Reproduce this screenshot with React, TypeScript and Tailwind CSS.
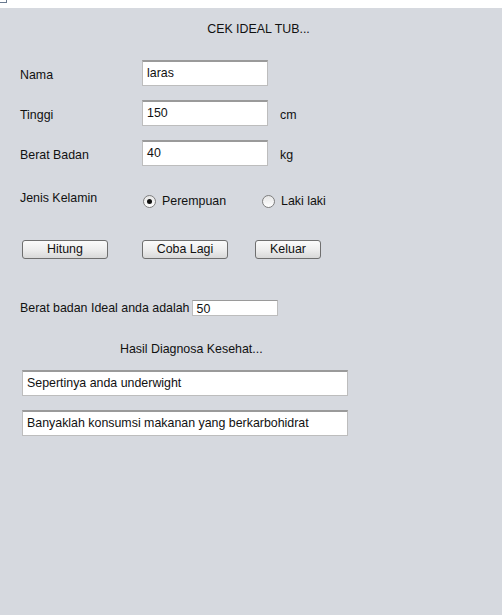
import React from "react";

const font = { fontFamily: '"Liberation Sans", Arial, sans-serif' };

function Field({ value, w, cls = "" }: { value: string; w: string; cls?: string }) {
  return (
    <div
      className={`h-[26px] ${w} bg-white border border-[#bdbdbd] border-t-2 border-t-[#9a9a9a] flex items-center pl-[4px] text-[12.4px] text-[#111] ${cls}`}
    >
      {value}
    </div>
  );
}

function Btn({ label, w, ml }: { label: string; w: string; ml: string }) {
  return (
    <div
      className={`h-[19px] ${w} ${ml} rounded-[3px] border border-[#6f6f6f] bg-gradient-to-b from-[#fbfbfb] via-[#eeeeee] to-[#d9d9d9] flex items-center justify-center text-[12.4px] text-[#111]`}
    >
      {label}
    </div>
  );
}

function Radio({ checked }: { checked: boolean }) {
  return (
    <div className="w-[13px] h-[13px] rounded-full border border-[#7e7e7e] bg-gradient-to-b from-[#e6e6e6] to-white flex items-center justify-center">
      {checked && <div className="w-[5px] h-[5px] rounded-full bg-[#111]" />}
    </div>
  );
}

export default function App() {
  return (
    <div className="w-[503px] h-[615px] bg-white flex flex-col" style={font}>
      <div className="h-[8px] bg-white relative">
        <div className="absolute left-0 top-0 w-[7px] h-[3px] border-b border-r border-[#6a7a90]" />
      </div>
      <div className="flex-1 bg-[#d6d9df] mr-[1px] flex flex-col text-[12.4px] text-[#111]">
        <div className="mt-[13px] h-[16px] leading-[16px] text-center pl-[15px]">CEK IDEAL TUB...</div>

        <div className="mt-[23px] h-[26px] flex items-center pl-[20px]">
          <div className="w-[122px] pt-[5px]">Nama</div>
          <Field value="laras" w="w-[126px]" />
        </div>
        <div className="mt-[14px] h-[26px] flex items-center pl-[20px]">
          <div className="w-[122px] pt-[5px]">Tinggi</div>
          <Field value="150" w="w-[126px]" />
          <div className="ml-[12px] pt-[5px]">cm</div>
        </div>
        <div className="mt-[14px] h-[26px] flex items-center pl-[20px]">
          <div className="w-[122px] pt-[5px]">Berat Badan</div>
          <Field value="40" w="w-[126px]" />
          <div className="ml-[12px] pt-[5px]">kg</div>
        </div>

        <div className="mt-[20px] h-[26px] flex items-start pl-[20px]">
          <div className="w-[123px] mt-[3px]">Jenis Kelamin</div>
          <div className="flex items-center mt-[6px] w-[119px]">
            <Radio checked />
            <span className="ml-[6px]">Perempuan</span>
          </div>
          <div className="flex items-center mt-[6px]">
            <Radio checked={false} />
            <span className="ml-[6px]">Laki laki</span>
          </div>
        </div>

        <div className="mt-[28px] flex">
          <Btn label="Hitung" w="w-[86px]" ml="ml-[22px]" />
          <Btn label="Coba Lagi" w="w-[86px]" ml="ml-[34px]" />
          <Btn label="Keluar" w="w-[66px]" ml="ml-[27px]" />
        </div>

        <div className="mt-[41px] h-[16px] flex items-center pl-[20px]">
          <span>Berat badan Ideal anda adalah</span>
          <div className="ml-[3px] w-[86px] h-[16px] bg-white border border-[#bdbdbd] border-t-[#9a9a9a] overflow-hidden pl-[3px] leading-[17px]">
            50
          </div>
        </div>

        <div className="mt-[25px] h-[16px] leading-[16px] pl-[120px]">Hasil Diagnosa Kesehat...</div>

        <div className="mt-[13px] pl-[22px]">
          <Field value="Sepertinya anda underwight" w="w-[326px]" />
        </div>
        <div className="mt-[14px] pl-[22px]">
          <Field value="Banyaklah konsumsi makanan yang berkarbohidrat" w="w-[326px]" />
        </div>
      </div>
    </div>
  );
}
